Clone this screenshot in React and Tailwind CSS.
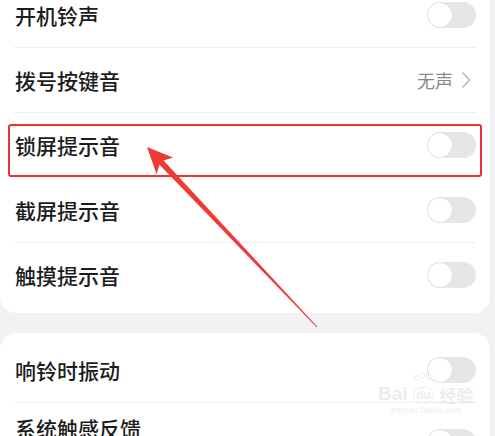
import React from "react";

function Toggle() {
  return (
    <div className="relative h-[26px] w-[49px] rounded-full bg-[#e6e6e6]">
      <div className="absolute left-[1px] top-[1px] h-[24px] w-[24px] rounded-full bg-white shadow-[0_0_1px_rgba(0,0,0,0.15)]" />
    </div>
  );
}

function Row({ label, right }) {
  return (
    <div className="flex h-[64px] items-center justify-between pl-[15px] pr-[14px]">
      <span className="text-[21px] font-medium leading-none text-[#1c1c1c]">{label}</span>
      {right || <Toggle />}
    </div>
  );
}

function Divider() {
  return <div className="mx-[14px] h-px bg-[#ededed]" />;
}

export default function App() {
  return (
    <div
      className="relative h-[436px] w-[495px] overflow-hidden bg-[#f2f2f4]"
      style={{ fontFamily: '"Noto Sans CJK SC", "Noto Sans", sans-serif' }}
    >
      <div className="w-[490px] -mt-[17px] rounded-b-[16px] bg-white pb-[6px]">
        <Row label="开机铃声" />
        <Divider />
        <Row
          label="拨号按键音"
          right={
            <div className="flex items-center gap-[8px] pr-[5px]">
              <span className="text-[18px] leading-none text-[#8a8a8a]">无声</span>
              <svg width="10" height="18" viewBox="0 0 10 18">
                <polyline points="1.5,1.5 8.5,9 1.5,16.5" fill="none" stroke="#b5b5b5" strokeWidth="1.4" />
              </svg>
            </div>
          }
        />
        <Divider />
        <Row label="锁屏提示音" />
        <div className="mx-[14px] h-px bg-white" />
        <Row label="截屏提示音" />
        <Divider />
        <Row label="触摸提示音" />
      </div>
      <div className="mt-[20px] w-[490px] rounded-t-[16px] bg-white pt-[5px]">
        <Row label="响铃时振动" />
        <Divider />
        <div className="flex justify-between pl-[15px] pr-[14px]">
          <span className="mt-[15px] text-[21px] font-medium leading-none text-[#1c1c1c]">系统触感反馈</span>
          <div className="mt-[26px]">
            <Toggle />
          </div>
        </div>
      </div>

      {/* red highlight box */}
      <div className="absolute left-[8px] top-[124px] h-[53px] w-[474px] rounded-[3px] border-2 border-[#e8332f]" />

      {/* arrow */}
      <svg className="absolute left-0 top-0" width="495" height="436" viewBox="0 0 495 436">
        <polygon points="157.8,163.1 162.2,158.9 317.4,326.7 316.6,327.3" fill="#ef3b36" />
        <polygon points="147,147 173,157.5 160.7,161.5 156.5,174" fill="#ef3b36" />
      </svg>

      {/* watermark */}
      <div className="absolute left-[378px] top-[381px] flex flex-col items-center opacity-60">
        <div className="flex items-end gap-[2px]">
          <span className="text-[19px] font-bold leading-none text-[#e2e2e2]" style={{ fontFamily: '"Liberation Sans", sans-serif' }}>Bai</span>
          <div className="relative flex h-[22px] w-[28px] items-end justify-center">
            <div className="absolute left-[4px] top-[-6px] h-[6px] w-[5px] rounded-full border border-[#e2e2e2]" />
            <div className="absolute left-[10px] top-[-9px] h-[7px] w-[5px] rounded-full border border-[#e2e2e2]" />
            <div className="absolute left-[16px] top-[-9px] h-[7px] w-[5px] rounded-full border border-[#e2e2e2]" />
            <div className="absolute left-[22px] top-[-6px] h-[6px] w-[5px] rounded-full border border-[#e2e2e2]" />
            <div className="rounded-[8px] border border-[#e2e2e2] px-[2px] text-[12px] font-bold leading-[14px] text-[#e2e2e2]" style={{ fontFamily: '"Liberation Sans", sans-serif' }}>du</div>
          </div>
          <span className="text-[17px] font-bold leading-none text-[#e2e2e2]">经验</span>
        </div>
        <span className="mt-[3px] text-[9px] leading-none text-[#e6e6e6]" style={{ fontFamily: '"Liberation Sans", sans-serif' }}>jingyan.baidu.com</span>
      </div>
    </div>
  );
}
